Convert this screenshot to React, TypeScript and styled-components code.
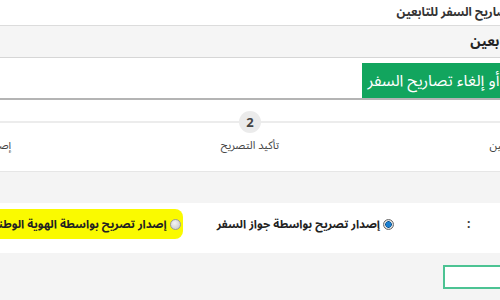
import styled, { createGlobalStyle } from "styled-components";

const GlobalStyle = createGlobalStyle`
  html, body { margin: 0; padding: 0; background: #f4f4f4; overflow: hidden; }
  body { font-family: "Noto Sans Arabic", "DejaVu Sans", "Noto Sans", sans-serif; }
`;

const Page = styled.div`
  direction: rtl; width: 500px; height: 300px; overflow: hidden; background: #f4f4f4;
`;

const Bleed = styled.div<{ $right: number }>`
  margin-right: ${(p) => -p.$right}px; white-space: nowrap;
`;

const TitleBar = styled.div`
  height: 25px; background: #fff; border-bottom: 1px solid #dcdcdc;
  display: flex; align-items: center;
`;
const Title = styled.h1`
  margin: 0; font-size: 12px; font-weight: bold; color: #333;
`;

const PanelHeader = styled.div`
  height: 31px; background: #f5f5f5; border-bottom: 1px solid #d6d6d6;
  display: flex; align-items: center;
`;
const PanelTitle = styled.h2`
  margin: 0; font-size: 14px; font-weight: bold; color: #222;
`;

const TabsBar = styled.div`
  height: 35px; padding-top: 5px; background: #fff; border-bottom: 2px solid #b4b4b4;
  display: flex; align-items: flex-end;
`;
const Tab = styled.div`
  height: 35px; padding: 0 6px; background: #12a55e; color: #fff;
  font-size: 16px; display: flex; align-items: center;
`;

const StepsPanel = styled.div`
  height: 71px; background: #fff; border-bottom: 1px solid #e6e6e6;
  display: flex; justify-content: center; overflow: hidden;
`;
const StepsTrack = styled.ol`
  flex: 0 0 810px; margin: 0; padding: 0; list-style: none;
  display: grid; grid-template-columns: repeat(3, 1fr); position: relative;
  &::before {
    content: ""; position: absolute; left: 0; right: 0; top: 21px; height: 2px; background: #ececec;
  }
`;
const Step = styled.li`
  display: flex; flex-direction: column; align-items: center; position: relative;
`;
const StepNum = styled.span`
  margin-top: 11px; width: 22px; height: 22px; border-radius: 50%;
  background: #ebebeb; color: #444; font-size: 13px; font-weight: bold;
  display: flex; align-items: center; justify-content: center;
  font-family: "Open Sans", sans-serif;
`;
const StepLabel = styled.span`
  margin-top: 6px; font-size: 11px; line-height: 14px; color: #444; white-space: nowrap;
`;

const Gap = styled.div`
  height: 31px;
`;

const FormPanel = styled.div`
  height: 50px; background: #fff; display: flex; align-items: center;
`;
const FormRow = styled.div`
  display: flex; align-items: center; gap: 71px; margin-top: -8px;
`;
const FieldLabel = styled.label`
  width: 133px; display: flex; justify-content: space-between; align-items: center;
  font-size: 12px; font-weight: bold; color: #333;
`;
const LabelText = styled.span``;
const Radios = styled.div`
  display: flex; align-items: center; gap: 30px;
`;
const RadioOption = styled.label<{ $marked?: boolean }>`
  display: flex; align-items: center; gap: 3px;
  font-size: 11.5px; font-weight: bold; color: #222;
  padding: 3px 2px 3px 4px; border-radius: 8px;
  background: ${(p) => (p.$marked ? "#fafa00" : "transparent")};
`;
const RadioDot = styled.span<{ $checked?: boolean }>`
  width: 11px; height: 11px; border-radius: 50%; box-sizing: border-box; flex: none;
  border: 1px solid ${(p) => (p.$checked ? "#6a6a6a" : "#9a9a9a")};
  background: ${(p) =>
    p.$checked
      ? "radial-gradient(circle, #1a7fd0 0 2.5px, #0b4f8a 3px, #e4e4e4 3.5px, #c8c8c8 100%)"
      : "radial-gradient(circle at 40% 35%, #f4f4f4, #c4c4c4)"};
`;

const InputRow = styled.div`
  padding-top: 12px; display: flex;
`;
const TextInput = styled.input`
  display: block; width: 160px; height: 24px; box-sizing: border-box; margin: 0;
  border: 2px solid #4cc393; background: #fff; outline: none;
`;

export default function App() {
  return (
    <Page>
      <GlobalStyle />
      <TitleBar>
        <Bleed $right={46}>
          <Title>إصدار تصاريح السفر للتابعين</Title>
        </Bleed>
      </TitleBar>

      <PanelHeader>
        <Bleed $right={106}>
          <PanelTitle>تصاريح السفر للتابعين</PanelTitle>
        </Bleed>
      </PanelHeader>

      <TabsBar>
        <Bleed $right={46}>
          <Tab>إصدار أو إلغاء تصاريح السفر</Tab>
        </Bleed>
      </TabsBar>

      <StepsPanel>
        <StepsTrack>
          <Step>
            <StepNum>1</StepNum>
            <StepLabel>اختيار التابعين</StepLabel>
          </Step>
          <Step>
            <StepNum>2</StepNum>
            <StepLabel>تأكيد التصريح</StepLabel>
          </Step>
          <Step>
            <StepNum>3</StepNum>
            <StepLabel>إصدار التصريح</StepLabel>
          </Step>
        </StepsTrack>
      </StepsPanel>

      <Gap />

      <FormPanel>
        <Bleed $right={100}>
          <FormRow>
            <FieldLabel>
              <LabelText>نوع الإصدار</LabelText>
              <span>:</span>
            </FieldLabel>
            <Radios>
              <RadioOption>
                <RadioDot $checked />
                إصدار تصريح بواسطة جواز السفر
              </RadioOption>
              <RadioOption $marked>
                <RadioDot />
                إصدار تصريح بواسطة الهوية الوطنية
              </RadioOption>
            </Radios>
          </FormRow>
        </Bleed>
      </FormPanel>

      <InputRow>
        <Bleed $right={103}>
          <TextInput type="text" />
        </Bleed>
      </InputRow>
    </Page>
  );
}
